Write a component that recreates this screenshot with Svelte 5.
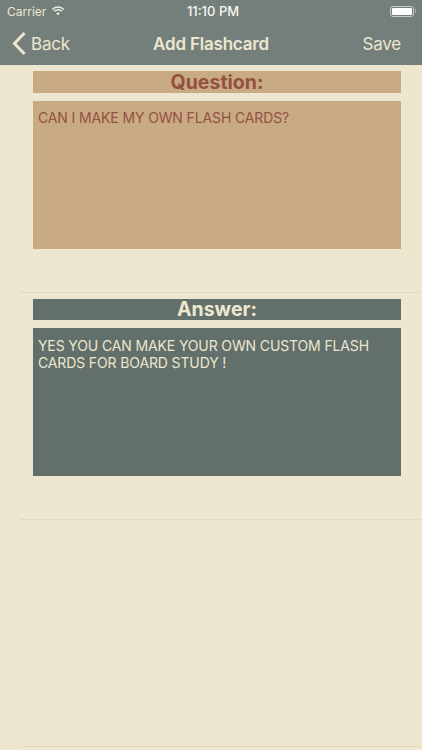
<script>
  const cards = [
    { label: 'Question:', text: 'CAN I MAKE MY OWN FLASH CARDS?', tone: 'tan' },
    { label: 'Answer:', text: 'YES YOU CAN MAKE YOUR OWN CUSTOM FLASH CARDS FOR BOARD STUDY !', tone: 'slate' }
  ];
</script>

<div class="screen">
  <header class="nav">
    <div class="status">
      <div class="status-left">
        <span>Carrier</span>
        <svg class="wifi" width="14" height="10" viewBox="0 0 16 12" aria-hidden="true">
          <path d="M8 11.2 5.7 8.8a3.3 3.3 0 0 1 4.6 0Z" fill="currentColor"/>
          <path d="M3.9 7 2.7 5.8a7.6 7.6 0 0 1 10.6 0L12.1 7a5.9 5.9 0 0 0-8.2 0Z" fill="currentColor"/>
          <path d="M1.6 4.7.4 3.5a10.9 10.9 0 0 1 15.2 0l-1.2 1.2a9.2 9.2 0 0 0-12.8 0Z" fill="currentColor"/>
        </svg>
      </div>
      <span class="time">11:10 PM</span>
      <div class="battery"><i></i></div>
    </div>
    <div class="bar">
      <div class="back">
        <svg width="15" height="25" viewBox="0 0 15 25" aria-hidden="true">
          <path d="M12.5 2 2.5 12.5l10 10.5" fill="none" stroke="currentColor" stroke-width="3"/>
        </svg>
        <span>Back</span>
      </div>
      <span class="title">Add Flashcard</span>
      <span class="save">Save</span>
    </div>
  </header>

  {#each cards as card}
    <section class="row {card.tone}">
      <h2>{card.label}</h2>
      <p>{card.text}</p>
    </section>
  {/each}
  <section class="row"></section>
</div>

<style>
  :global(body) { margin: 0; background: #ede7cf; }
  .screen {
    width: 422px;
    height: 750px;
    overflow: hidden;
    background: #ede7cf;
    font-family: Inter, "Liberation Sans", sans-serif;
  }
  .nav { height: 65px; background: #747f7b; color: #ede7cf; }
  .status {
    height: 22px;
    padding: 0 8px 0 7px;
    display: flex;
    align-items: center;
    justify-content: space-between;
    position: relative;
    font-size: 12px;
  }
  .status-left { display: flex; align-items: center; gap: 5px; }
  .wifi { color: #f4f1e2; }
  .time {
    position: absolute;
    left: 4px;
    right: 0;
    text-align: center;
    font-size: 13px;
    font-weight: 500;
    color: #f8f6ec;
  }
  .battery {
    box-sizing: border-box;
    width: 24px;
    height: 11px;
    padding: 1px;
    border: 1px solid #c8cbbf;
    border-radius: 3px;
    position: relative;
  }
  .battery::after {
    content: "";
    position: absolute;
    right: -3px;
    top: 2px;
    width: 1px;
    height: 4px;
    background: #a9afa6;
  }
  .battery i { display: block; height: 100%; background: #fff; border-radius: 1px; }
  .bar {
    height: 43px;
    padding: 0 21px 0 12px;
    display: flex;
    align-items: center;
    justify-content: space-between;
    position: relative;
    font-size: 17px;
    letter-spacing: -0.2px;
  }
  .back { display: flex; align-items: center; gap: 4px; }
  .title {
    position: absolute;
    left: 0;
    right: 0;
    text-align: center;
    font-weight: 600;
  }
  .row {
    box-sizing: border-box;
    height: 227px;
    margin-left: 20px;
    padding: 6px 21px 0 13px;
    border-bottom: 1px solid #e0dac3;
  }
  .row.tan { height: 228px; }
  h2 {
    margin: 0 0 8px;
    height: 22px;
    line-height: 22px;
    text-align: center;
    font-size: 19.5px;
    font-weight: 700;
  }
  .slate h2 { height: 21px; line-height: 21px; }
  p {
    box-sizing: border-box;
    margin: 0;
    height: 148px;
    padding: 8px 5px;
    font-size: 14px;
    line-height: 17px;
    letter-spacing: -0.13px;
  }
  .slate p { padding-top: 9px; }
  .tan h2, .tan p { background: #c8ab85; color: #95513f; }
  .slate h2, .slate p { background: #626f6a; color: #ede7cf; }
</style>
